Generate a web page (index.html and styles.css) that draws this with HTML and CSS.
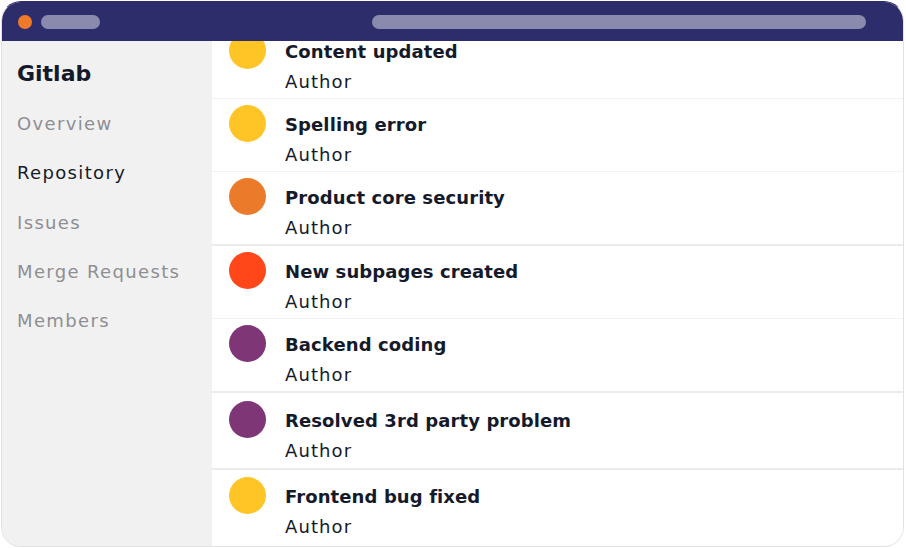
FILE: index.html
```html
<!DOCTYPE html>
<html lang="en">
<head>
    <meta charset="UTF-8">
    <meta name="viewport" content="width=device-width, initial-scale=1.0">
    <title>Gitlab - Repository</title>
    <link rel="stylesheet" href="styles.css">
</head>
<body>
    <div class="window">
        <div class="titlebar">
            <span class="dot"></span>
            <span class="pill pill-short"></span>
            <span class="pill pill-long"></span>
        </div>

        <div class="app">
            <aside class="sidebar">
                <h1 class="brand">Gitlab</h1>
                <nav class="nav">
                    <a class="nav-item">Overview</a>
                    <a class="nav-item active">Repository</a>
                    <a class="nav-item">Issues</a>
                    <a class="nav-item">Merge Requests</a>
                    <a class="nav-item">Members</a>
                </nav>
            </aside>

            <main class="main">
                <ul class="commits">
                    <li class="commit">
                        <span class="avatar yellow"></span>
                        <div class="commit-text">
                            <div class="commit-title">Content updated</div>
                            <div class="commit-author">Author</div>
                        </div>
                    </li>
                    <li class="commit">
                        <span class="avatar yellow"></span>
                        <div class="commit-text">
                            <div class="commit-title">Spelling error</div>
                            <div class="commit-author">Author</div>
                        </div>
                    </li>
                    <li class="commit group-end">
                        <span class="avatar orange"></span>
                        <div class="commit-text">
                            <div class="commit-title">Product core security</div>
                            <div class="commit-author">Author</div>
                        </div>
                    </li>
                    <li class="commit">
                        <span class="avatar red"></span>
                        <div class="commit-text">
                            <div class="commit-title">New subpages created</div>
                            <div class="commit-author">Author</div>
                        </div>
                    </li>
                    <li class="commit group-end">
                        <span class="avatar purple"></span>
                        <div class="commit-text">
                            <div class="commit-title">Backend coding</div>
                            <div class="commit-author">Author</div>
                        </div>
                    </li>
                    <li class="commit tall group-end">
                        <span class="avatar purple"></span>
                        <div class="commit-text">
                            <div class="commit-title">Resolved 3rd party problem</div>
                            <div class="commit-author">Author</div>
                        </div>
                    </li>
                    <li class="commit last">
                        <span class="avatar yellow"></span>
                        <div class="commit-text">
                            <div class="commit-title">Frontend bug fixed</div>
                            <div class="commit-author">Author</div>
                        </div>
                    </li>
                </ul>
            </main>
        </div>
    </div>
</body>
</html>
```

FILE: styles.css
```css
* {
    margin: 0;
    padding: 0;
    box-sizing: border-box;
}

body {
    font-family: "DejaVu Sans", "Noto Sans", sans-serif;
    background: #fff;
    color: #151a2b;
}

.window {
    width: 903px;
    height: 546px;
    margin: 1px 0 0 1px;
    border: 1px solid #e2e2e2;
    border-top-color: #2d2d6c;
    border-radius: 20px;
    overflow: hidden;
    display: flex;
    flex-direction: column;
}

.titlebar {
    height: 39px;
    flex-shrink: 0;
    background: #2d2d6c;
    display: flex;
    align-items: center;
    padding: 0 37px 0 16px;
    gap: 9px;
}

.dot {
    width: 14px;
    height: 14px;
    border-radius: 50%;
    background: #ee7a2a;
}

.pill {
    height: 14px;
    border-radius: 7px;
    background: #8a8aae;
}

.pill-short {
    width: 59px;
}

.pill-long {
    width: 494px;
    margin-left: auto;
}

.app {
    flex: 1;
    display: flex;
    min-height: 0;
}

.sidebar {
    width: 210px;
    flex-shrink: 0;
    background: #f1f1f1;
    padding: 19px 0 0 15px;
}

.brand {
    font-size: 22px;
    font-weight: 700;
    line-height: 28px;
    color: #151a2b;
    margin-bottom: 11px;
}

.nav {
    display: flex;
    flex-direction: column;
}

.nav-item {
    font-size: 18px;
    line-height: 49.3px;
    letter-spacing: 1.35px;
    color: #8e8e93;
}

.nav-item.active {
    color: #151a2b;
}

.main {
    flex: 1;
    overflow: hidden;
    background: #fff;
}

.commits {
    list-style: none;
    margin-top: -15px;
}

.commit {
    height: 73px;
    display: flex;
    align-items: flex-start;
    gap: 19px;
    padding: 6px 0 0 17px;
    border-bottom: 1px solid #f2f2f2;
}

.commit.group-end {
    height: 74px;
    border-bottom: 2px solid #ebebeb;
}

.commit.tall {
    height: 77px;
    padding-top: 8px;
}

.commit.last {
    padding-top: 7px;
    border-bottom: none;
}

.avatar {
    width: 37px;
    height: 37px;
    border-radius: 50%;
    flex-shrink: 0;
}

.avatar.yellow { background: #ffc527; }
.avatar.orange { background: #ec7a2b; }
.avatar.red { background: #ff4719; }
.avatar.purple { background: #7e3676; }

.commit-text {
    padding-top: 8px;
}

.commit-title {
    font-size: 18px;
    font-weight: 700;
    line-height: 24px;
    letter-spacing: 0.1px;
}

.commit-author {
    font-size: 18px;
    line-height: 24px;
    letter-spacing: 1.1px;
    margin-top: 6px;
}
```
